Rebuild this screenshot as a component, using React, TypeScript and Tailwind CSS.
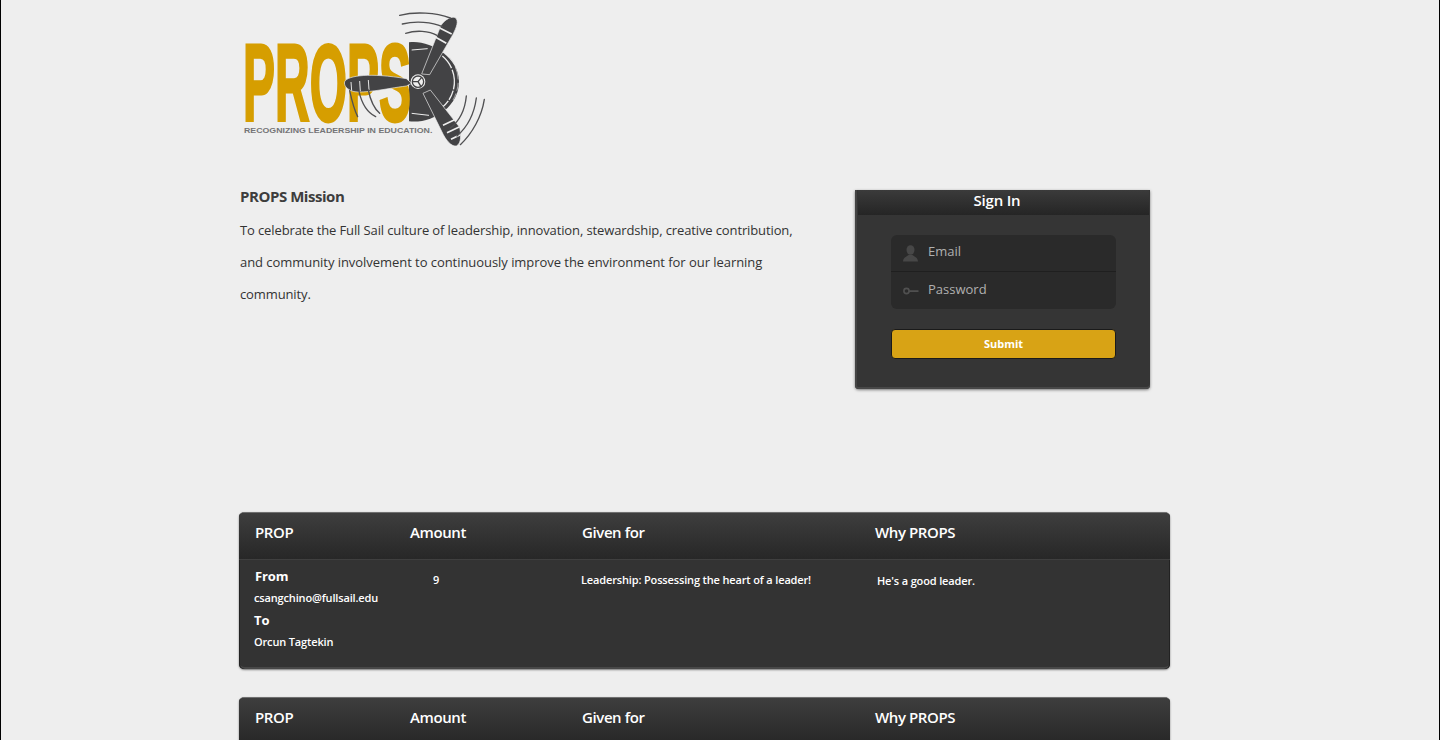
import React from 'react';

const PropsLogo = () => (
  <svg width="260" height="160" viewBox="30 0 780 480" className="block">
    {/* engine disc */}
    <path d="M540 127 C600 118 690 170 690 245 C690 320 610 372 540 364 Z" fill="#434345" />
    <path d="M640 168 A100 100 0 0 1 640 322" fill="none" stroke="#eeeeee" strokeWidth="4" strokeDasharray="46 5 60 4 30 4" />
    <path d="M662 172 A112 112 0 0 1 672 300" fill="none" stroke="#d8d8d8" strokeWidth="2" strokeDasharray="24 8 40 10" />
    <path d="M548 150 L596 146 M548 340 L600 346" stroke="#eeeeee" strokeWidth="3" />

    <text x="42" y="363" textLength="504" lengthAdjust="spacingAndGlyphs" stroke="#d69e00" strokeWidth="9" fontFamily="'Liberation Sans', sans-serif" fontWeight="700" fontSize="326" fill="#d69e00">PROPS</text>
    <text x="45" y="398" textLength="565" lengthAdjust="spacingAndGlyphs" fontFamily="'Liberation Sans', sans-serif" fontWeight="700" fontSize="20" fill="#747476">RECOGNIZING LEADERSHIP IN EDUCATION.</text>

    {/* blades */}
    <path d="M347 245 C356 226 425 218 532 236 L548 250 L532 258 C470 266 392 284 366 272 C352 265 344 256 347 245 Z" fill="#434345" stroke="#eeeeee" strokeWidth="2" />
    <path d="M366 246 L368 272 M392 243 L394 274 M418 240 L420 270" stroke="#e4e4e4" strokeWidth="3" fill="none" />
    <path d="M578 222 L636 76 C648 58 672 44 682 56 C690 68 678 92 668 110 L602 224 Z" fill="#434345" stroke="#eeeeee" strokeWidth="2" />
    <path d="M632 84 L668 102 M620 112 L652 130" stroke="#eeeeee" strokeWidth="5" fill="none" />
    <path d="M582 280 L604 270 L692 382 C696 404 698 430 682 438 C666 440 650 420 638 394 Z" fill="#434345" stroke="#eeeeee" strokeWidth="2" />
    <path d="M642 376 L680 358 M654 398 L692 380 M666 418 L694 404" stroke="#eeeeee" strokeWidth="5" fill="none" />

    {/* hub */}
    <circle cx="567" cy="245" r="22" fill="#eeeeee" />
    <circle cx="567" cy="245" r="17" fill="none" stroke="#434345" strokeWidth="4" />
    <path d="M567 245 L578 232 M567 245 L552 245 M567 245 L576 260" stroke="#434345" strokeWidth="4" />

    {/* motion lines */}
    <g fill="none" stroke="#505052" strokeWidth="4" strokeLinecap="round">
      <path d="M512 46 C560 34 620 38 664 54" />
      <path d="M520 72 C560 62 610 66 640 80" />
      <path d="M530 100 C560 90 600 92 624 106" />
      <path d="M766 298 C758 350 730 400 694 434" />
      <path d="M742 294 C736 340 716 380 684 408" />
      <path d="M712 288 C708 330 690 364 664 384" />
      <path d="M362 272 C368 300 376 330 386 350" />
      <path d="M390 274 C398 310 416 338 440 350" />
      <path d="M418 270 C424 300 436 326 452 340" />
    </g>
  </svg>
);

const UserIcon = () => (
  <svg width="15" height="17" viewBox="0 0 15 17" className="shrink-0">
    <ellipse cx="7.5" cy="5" rx="4" ry="4.8" fill="#474747" />
    <path d="M0 16.5 C0 12.5 4 11.5 5.5 10 H9.5 C11 11.5 15 12.5 15 16.5 Z" fill="#474747" />
  </svg>
);

const KeyIcon = () => (
  <svg width="16" height="8" viewBox="0 0 16 8" className="shrink-0">
    <circle cx="3.5" cy="4" r="2.6" fill="none" stroke="#505050" strokeWidth="1.6" />
    <path d="M6 3.2 H15.5 V5 H6 Z" fill="#505050" />
  </svg>
);

const PropHeader = () => (
  <div className="grid h-[47px] grid-cols-[155px_172px_293px_1fr] border-b border-[#3f3f3f] bg-gradient-to-b from-[#3e3e3e] to-[#272727] pl-[16px] pt-[8px] text-[15px] font-semibold tracking-[-0.4px] text-white">
    <div>PROP</div>
    <div>Amount</div>
    <div>Given for</div>
    <div>Why PROPS</div>
  </div>
);

const PropCard = ({ children }: { children?: React.ReactNode }) => (
  <div className="w-[931px] overflow-hidden rounded-[5px] border-t border-[#707070] bg-[#333333] shadow-[0_1px_2px_rgba(0,0,0,0.5),inset_1px_0_0_#222,inset_-1px_0_0_#222,inset_0_-2px_0_#484848]">
    <PropHeader />
    {children}
  </div>
);

export default function App() {
  return (
    <div className="h-[740px] overflow-hidden border-x border-black bg-[#eeeeee] font-['Open_Sans',sans-serif]">
      <div className="ml-[238px] w-[931px]">
        <PropsLogo />

        <div className="mt-[30px] flex items-start">
          <div className="ml-[1px] w-[615px] text-[#333333]">
            <h2 className="-mt-[1px] text-[15px] font-bold leading-[14px] tracking-[-0.45px] text-[#3d3d3d]">PROPS Mission</h2>
            <p className="mt-[11px] text-[13px] leading-[32px] tracking-[-0.12px]">
              To celebrate the Full Sail culture of leadership, innovation, stewardship, creative contribution,
              <br />
              <span className="tracking-[-0.05px]">and community involvement to continuously improve the environment for our learning</span>
              <br />
              community.
            </p>
          </div>

          <div className="w-[295px] rounded-b-[4px] bg-[#353535] shadow-[0_1px_3px_rgba(0,0,0,0.5),inset_0_-2px_0_#484848,inset_2px_0_0_#444]">
            <div className="ml-[3px] mr-[1px] h-[25px] bg-gradient-to-b from-[#3b3b3b] to-[#252525] pr-[13px] text-center text-[15px] font-semibold leading-[21px] tracking-[-0.2px] text-white">
              Sign In
            </div>
            <form className="pb-[30px] pl-[36px] pr-[34px] pt-[20px]">
              <div className="divide-y divide-[#1f1f1f] rounded-[6px] bg-[#2a2a2a]">
                <label className="flex h-[37px] items-center gap-[10px] pl-[12px]">
                  <UserIcon />
                  <input placeholder="Email" className="w-full bg-transparent pb-[2px] text-[13px] outline-none placeholder:text-[#b0b0b0]" />
                </label>
                <label className="flex h-[37px] items-center gap-[9px] pl-[12px]">
                  <KeyIcon />
                  <input type="password" placeholder="Password" className="w-full bg-transparent pb-[2px] text-[13px] outline-none placeholder:text-[#b0b0b0]" />
                </label>
              </div>
              <button type="button" className="mt-[20px] h-[30px] w-full rounded-[4px] border border-[#1a1a1a] bg-[#d8a315] text-[11px] font-bold text-white">
                Submit
              </button>
            </form>
          </div>
        </div>

        <div className="mt-[123px] flex flex-col gap-[28px]">
          <PropCard>
            <div className="grid h-[109px] grid-cols-[179px_148px_296px_1fr] pl-[15px] pt-[7px] text-[11px] font-semibold tracking-[-0.15px] text-white">
              <div>
                <div className="pl-[1px] text-[13px] font-bold leading-[18px]">From</div>
                <div className="mt-[3px] leading-[20px]">csangchino@fullsail.edu</div>
                <div className="mt-[2px] text-[13px] font-bold leading-[20px]">To</div>
                <div className="mt-[2px] leading-[20px]">Orcun Tagtekin</div>
              </div>
              <div className="pt-[5px]">9</div>
              <div className="pt-[5px]">Leadership: Possessing the heart of a leader!</div>
              <div className="pt-[6px]">He's a good leader.</div>
            </div>
          </PropCard>
          <PropCard />
        </div>
      </div>
    </div>
  );
}
